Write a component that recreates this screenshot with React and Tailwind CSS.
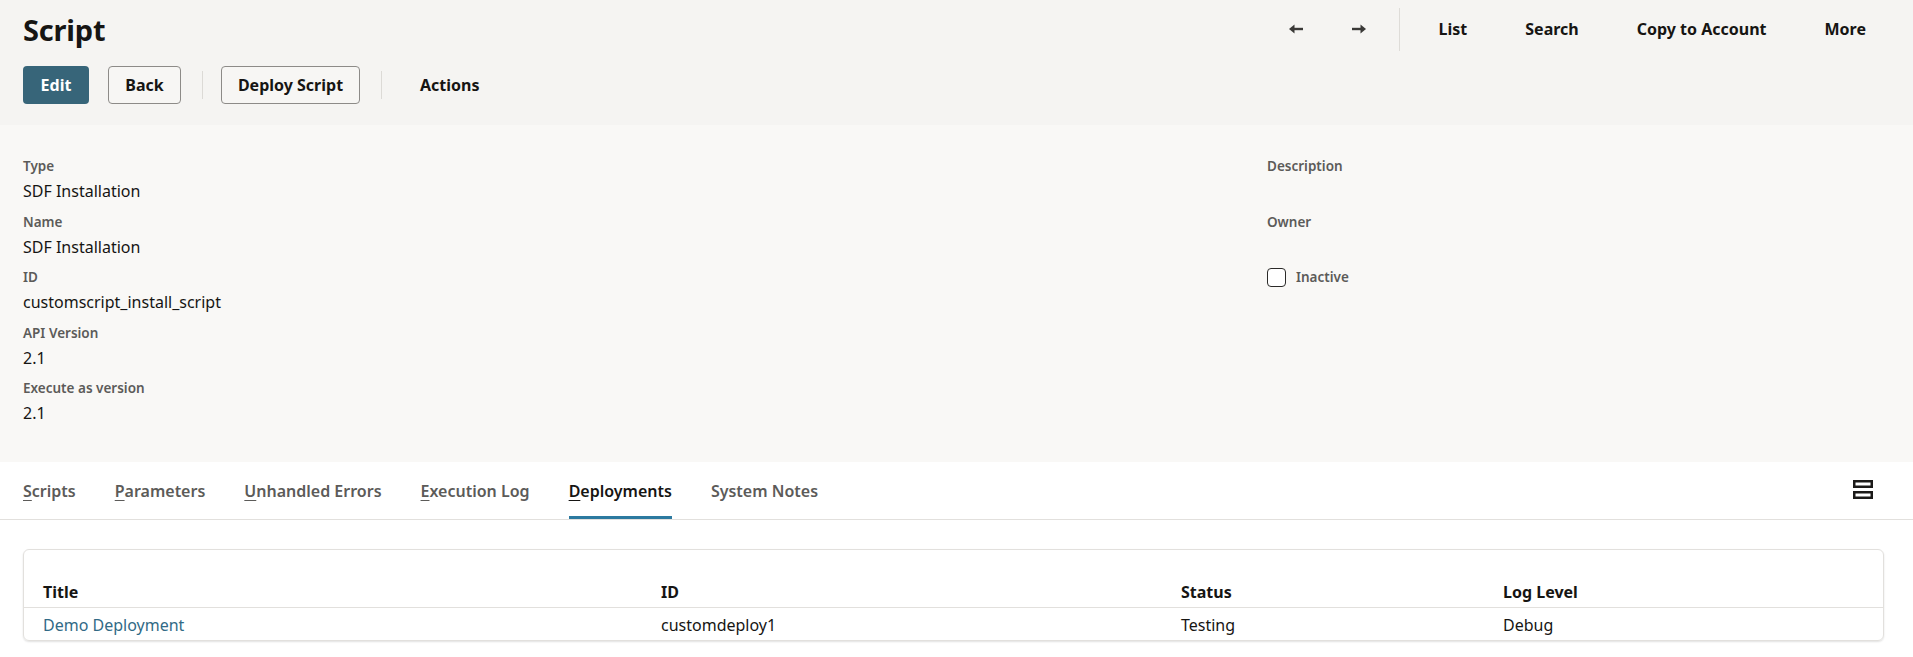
import React from 'react';

const fields = [
    { label: 'Type', value: 'SDF Installation' },
    { label: 'Name', value: 'SDF Installation' },
    { label: 'ID', value: 'customscript_install_script' },
    { label: 'API Version', value: '2.1' },
    { label: 'Execute as version', value: '2.1' },
];

const tabs = [
    { key: 'S', rest: 'cripts' },
    { key: 'P', rest: 'arameters' },
    { key: 'U', rest: 'nhandled Errors' },
    { key: 'E', rest: 'xecution Log' },
    { key: 'D', rest: 'eployments', active: true },
    { key: '', rest: 'System Notes' },
];

const deployments = [
    { title: 'Demo Deployment', id: 'customdeploy1', status: 'Testing', logLevel: 'Debug' },
];

const ArrowLeft = () => (
    <svg width="14" height="10" viewBox="0 0 14 10" fill="#3a3937">
        <polygon points="0,5 5.5,0.5 5.5,9.5" />
        <rect x="4" y="3.8" width="10" height="2.4" />
    </svg>
);

const ArrowRight = () => (
    <svg width="14" height="10" viewBox="0 0 14 10" fill="#3a3937">
        <polygon points="14,5 8.5,0.5 8.5,9.5" />
        <rect x="0" y="3.8" width="10" height="2.4" />
    </svg>
);

// two stacked outlined bars
const LayoutIcon = () => (
    <svg width="20" height="19" viewBox="0 0 20 19">
        <rect x="1.25" y="1.25" width="17.5" height="5.5" fill="none" stroke="#1b1a18" strokeWidth="2.5" />
        <rect x="1.25" y="12.25" width="17.5" height="5.5" fill="none" stroke="#1b1a18" strokeWidth="2.5" />
    </svg>
);

const Field = ({ label, value }) => (
    <div>
        <div className="text-[13.5px] leading-[20px] font-semibold text-[#5c5b59]">{label}</div>
        <div className="h-[30px] text-[16px] leading-[30px] text-[#161513]">{value}</div>
    </div>
);

export default function App() {
    return (
        <div className="min-h-screen bg-white font-['Noto_Sans',sans-serif] text-[#161513]">
            {/* page header */}
            <div className="h-[125px] bg-[#f5f4f2] pl-[23px] pr-[18px]">
                <div className="flex h-[58px] items-center justify-between">
                    <h1 className="text-[29px] font-bold leading-none tracking-[-0.2px]">Script</h1>
                    <div className="flex items-center">
                        <button className="flex w-[63px] justify-center"><ArrowLeft /></button>
                        <button className="flex w-[63px] justify-center"><ArrowRight /></button>
                        <div className="ml-[8px] h-[43px] w-px bg-[#dedcd8]" />
                        <div className="ml-[10px] flex text-[16px] font-bold">
                            {['List', 'Search', 'Copy to Account', 'More'].map((item) => (
                                <button key={item} className="px-[29px] leading-[24px]">{item}</button>
                            ))}
                        </div>
                    </div>
                </div>
                <div className="mt-[8px] flex items-center text-[16px] font-bold">
                    <button className="h-[38px] w-[66px] rounded-[4px] bg-[#376579] text-white">Edit</button>
                    <button className="ml-[19px] h-[38px] w-[73px] rounded-[4px] border border-[#8d8b88] bg-[#f7f6f4]">Back</button>
                    <div className="ml-[21px] h-[28px] w-px bg-[#dcdad6]" />
                    <button className="ml-[18px] h-[38px] w-[139px] rounded-[4px] border border-[#8d8b88] bg-[#f7f6f4]">Deploy Script</button>
                    <div className="ml-[21px] h-[28px] w-px bg-[#dcdad6]" />
                    <button className="ml-[20px] h-[38px] px-[18px]">Actions</button>
                </div>
            </div>

            {/* primary fields */}
            <div className="grid h-[337px] grid-cols-[1244px_1fr] bg-[#f9f8f6] pl-[23px] pt-[31px]">
                <div className="flex flex-col gap-[5.5px]">
                    {fields.map((f) => (
                        <Field key={f.label} label={f.label} value={f.value} />
                    ))}
                </div>
                <div className="flex flex-col gap-[5.5px]">
                    <Field label="Description" value="" />
                    <Field label="Owner" value="" />
                    <label className="flex h-[20px] items-center">
                        <span className="h-[19px] w-[19px] rounded-[4px] border-[1.5px] border-[#2b2a28] bg-white" />
                        <span className="ml-[10px] text-[13.5px] font-semibold text-[#5c5b59]">Inactive</span>
                    </label>
                </div>
            </div>

            {/* subtabs */}
            <div className="flex h-[58px] items-start justify-between border-b border-[#e2e0dd] pl-[23px] pr-[40px]">
                <div className="flex h-[57px] gap-[39px]">
                    {tabs.map((t) => (
                        <div key={t.rest} className="flex flex-col">
                            <div
                                className={
                                    t.active
                                        ? 'pt-[17px] text-[16px] font-semibold leading-[24px] text-[#161513]'
                                        : 'pt-[17px] text-[16px] font-semibold leading-[24px] text-[#5c5b59]'
                                }
                            >
                                {t.key && <span className="underline underline-offset-[3px]">{t.key}</span>}
                                {t.rest}
                            </div>
                            {t.active && <div className="mt-auto h-[3px] bg-[#2c7aa0]" />}
                        </div>
                    ))}
                </div>
                <button className="mt-[18px]"><LayoutIcon /></button>
            </div>

            {/* deployments list */}
            <div className="ml-[23px] mr-[29px] mt-[29px] rounded-[6px] border border-[#e2e0dd] shadow-[0_1px_2px_rgba(0,0,0,0.12)]">
                <div className="grid grid-cols-[618px_520px_322px_1fr] border-b border-[#e2e0dd] pb-[3px] pt-[30px] text-[16px] font-bold leading-[24px]">
                    <div className="pl-[19px]">Title</div>
                    <div className="pl-[19px]">ID</div>
                    <div className="pl-[19px]">Status</div>
                    <div className="pl-[19px]">Log Level</div>
                </div>
                {deployments.map((d) => (
                    <div key={d.id} className="grid grid-cols-[618px_520px_322px_1fr] pb-[3px] pt-[5px] text-[16px] leading-[24px]">
                        <div className="pl-[19px] text-[#316a86]">{d.title}</div>
                        <div className="pl-[19px]">{d.id}</div>
                        <div className="pl-[19px]">{d.status}</div>
                        <div className="pl-[19px]">{d.logLevel}</div>
                    </div>
                ))}
            </div>
        </div>
    );
}
